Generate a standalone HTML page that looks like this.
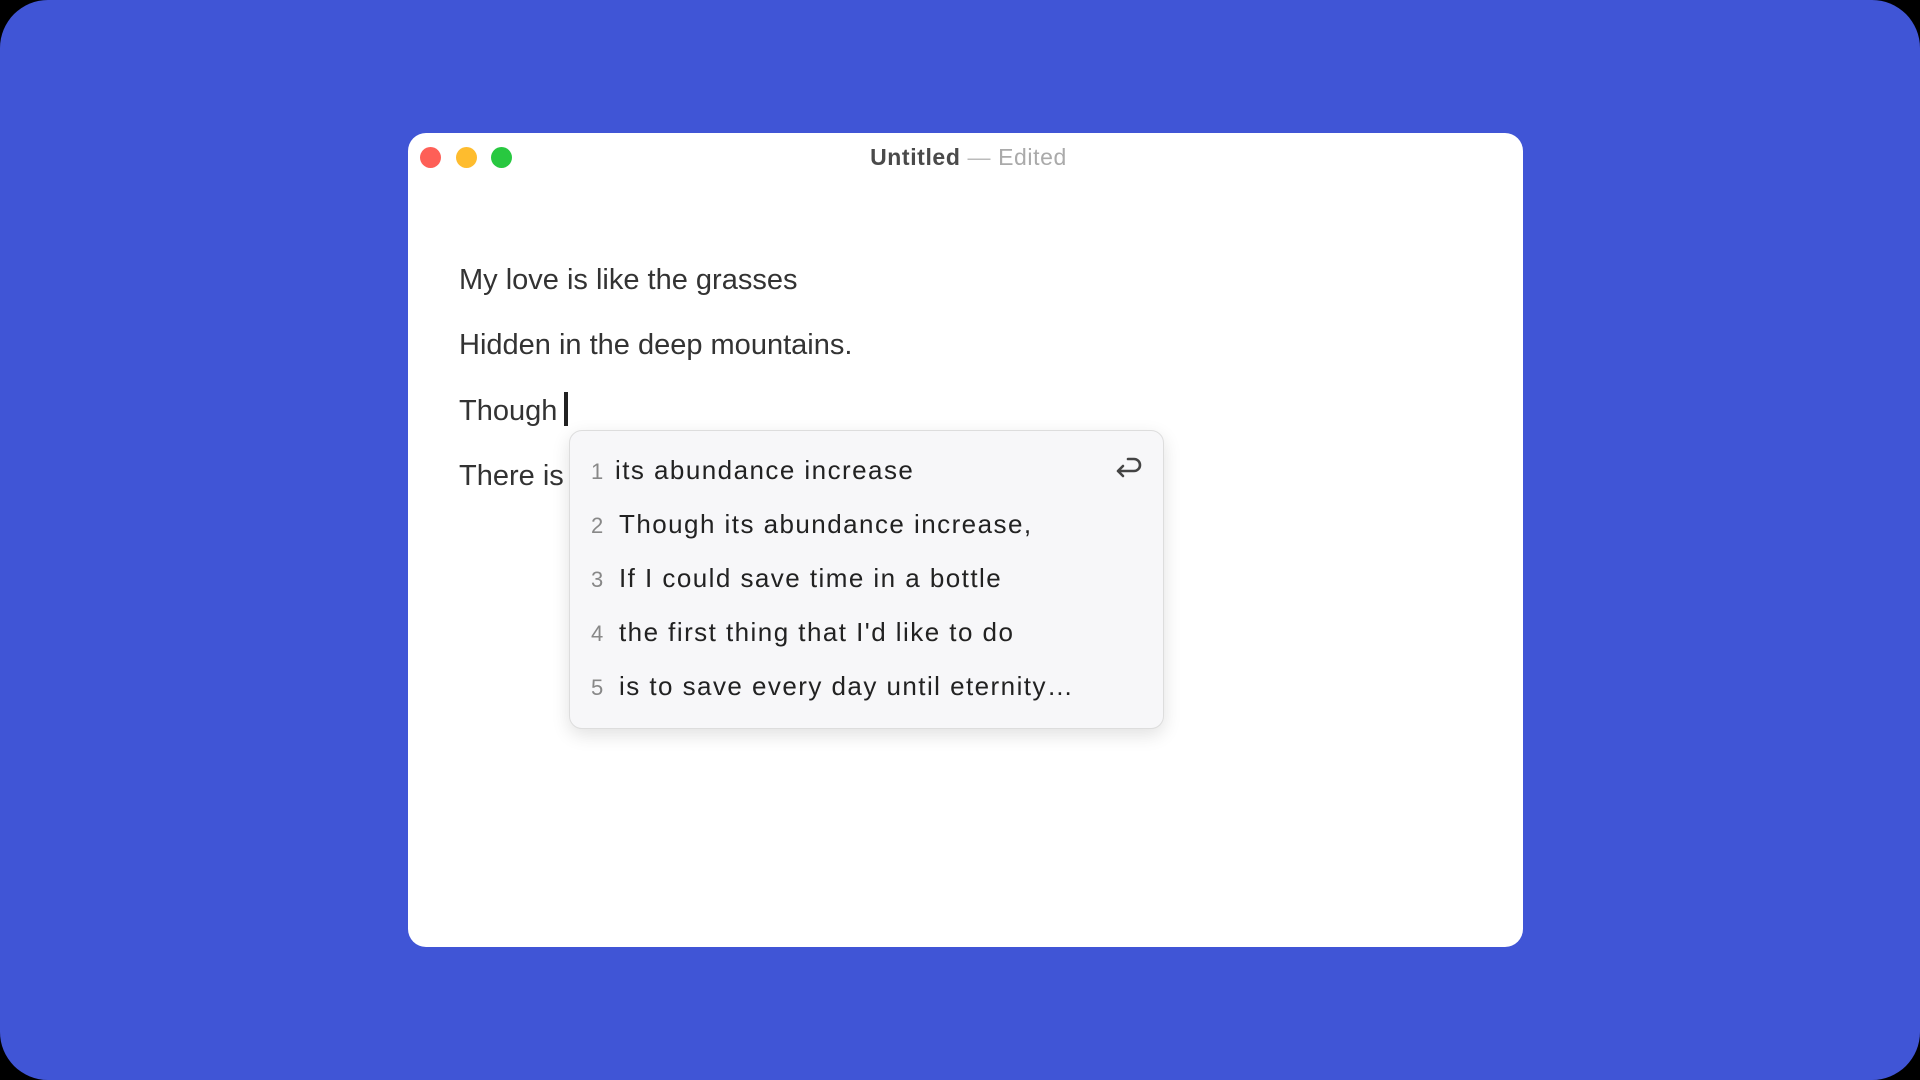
<!DOCTYPE html>
<html><head><meta charset="utf-8"><style>
html,body{margin:0;padding:0;width:1920px;height:1080px;background:#000;overflow:hidden}
.bg{position:absolute;left:0;top:0;width:1920px;height:1080px;background:#4055d6;border-radius:48px}
.win{position:absolute;left:408px;top:133px;width:1115px;height:814px;background:#fff;border-radius:18px}
.tl{position:absolute;top:147px;width:21px;height:21px;border-radius:50%}
.title{position:absolute;left:0;width:1115px;top:11px;text-align:center;font:23px "Liberation Sans",sans-serif;color:#555;letter-spacing:0.6px;padding-left:6px;box-sizing:border-box}
.title b{color:#4a4a4a}
.title span{color:#aaa}
.line{position:absolute;left:459px;font:29px "Liberation Sans",sans-serif;color:#333}
.cur{position:absolute;left:564px;top:392px;width:4px;height:34px;background:#222}
.pop{position:absolute;left:569px;top:430px;width:593px;height:297px;background:#f7f7f9;border:1px solid #ddd;border-radius:13px;box-shadow:0 6px 18px rgba(0,0,0,.12)}
.it{position:absolute;left:0;font:26px "Liberation Sans",sans-serif;color:#222;letter-spacing:1.45px;white-space:nowrap}
.it i{font-style:normal;color:#888;display:inline-block;width:24px;margin-left:21px;font-size:22px;letter-spacing:0}
</style></head><body>
<div class="bg"></div>
<div class="win"><div class="title"><b>Untitled</b> <span style="color:#bbb">—</span> <span>Edited</span></div></div>
<div class="tl" style="left:420px;background:#fe5f57"></div>
<div class="tl" style="left:456px;background:#febc2e"></div>
<div class="tl" style="left:491px;background:#28c840"></div>
<div class="line" style="top:264px">My love is like the grasses</div>
<div class="line" style="top:329px">Hidden in the deep mountains.</div>
<div class="line" style="top:395px">Though</div>
<div class="line" style="top:460px">There is</div>
<div class="cur"></div>
<div class="pop">
<div class="it" style="top:24px"><i>1</i>its abundance increase</div>
<div class="it" style="top:78px"><i>2</i><span style="margin-left:4px">Though its abundance increase,</span></div>
<div class="it" style="top:132px"><i>3</i><span style="margin-left:4px">If I could save time in a bottle</span></div>
<div class="it" style="top:186px"><i>4</i><span style="margin-left:4px">the first thing that I'd like to do</span></div>
<div class="it" style="top:240px"><i>5</i><span style="margin-left:4px">is to save every day until eternity…</span></div>
<svg style="position:absolute;left:540px;top:22px" width="36" height="30" viewBox="0 0 36 30"><path d="M18 6H24A6 6 0 0 1 24 18H8M13 13L8 18L13 23" fill="none" stroke="#444" stroke-width="2.6" stroke-linecap="round" stroke-linejoin="round"/></svg>
</div>
</body></html>
